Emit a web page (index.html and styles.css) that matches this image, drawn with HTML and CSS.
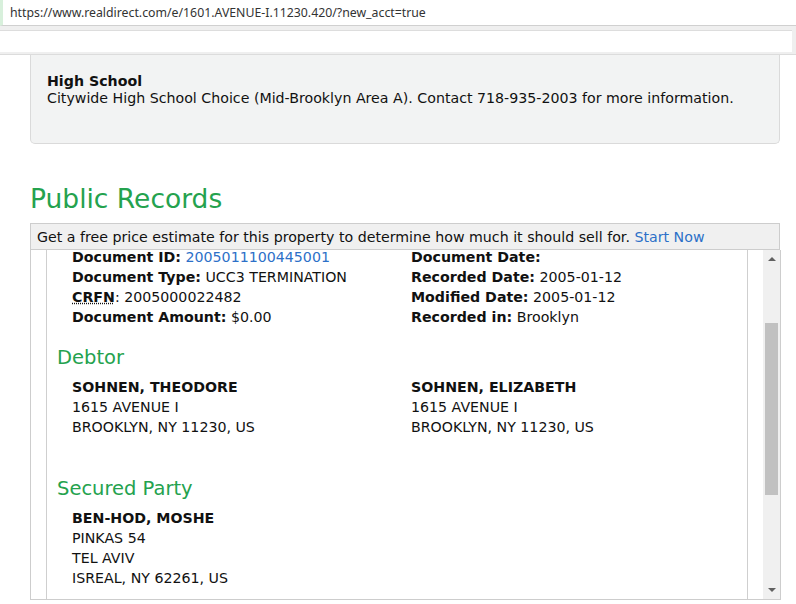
FILE: index.html
```html
<!DOCTYPE html>
<html>
  <head>
    <title>Public Records</title>
    <link rel="stylesheet" href="styles.css">
  </head>

  <body>
    <!-- Browser address bar -->
    <div class="address-bar">https://www.realdirect.com/e/1601.AVENUE-I.11230.420/?new_acct=true</div>
    <div class="toolbar">
      <div class="toolbar-input"></div>
    </div>

    <div class="page">
      <!-- School info box -->
      <div class="school-box">
        <p class="school-title">High School</p>
        <p class="school-text">Citywide High School Choice (Mid-Brooklyn Area A). Contact 718-935-2003 for more information.</p>
      </div>

      <h1 class="section-title">Public Records</h1>

      <div class="estimate-banner">
        Get a free price estimate for this property to determine how much it should sell for. <a href="#" class="link">Start Now</a>
      </div>

      <!-- Records frame with its own scrollbar -->
      <div class="records-frame">
        <div class="records-view">
          <div class="records">
            <div class="record-grid">
              <div class="record-col">
                <p><b>Document ID:</b> <a href="#" class="link">2005011100445001</a></p>
                <p><b>Document Type:</b> UCC3 TERMINATION</p>
                <p><abbr title="City Register File Number"><b>CRFN</b></abbr>: 2005000022482</p>
                <p><b>Document Amount:</b> $0.00</p>
              </div>
              <div class="record-col">
                <p><b>Document Date:</b></p>
                <p><b>Recorded Date:</b> 2005-01-12</p>
                <p><b>Modified Date:</b> 2005-01-12</p>
                <p><b>Recorded in:</b> Brooklyn</p>
              </div>
            </div>

            <h2 class="party-title">Debtor</h2>
            <div class="record-grid party">
              <div class="record-col">
                <p><b>SOHNEN, THEODORE</b></p>
                <p>1615 AVENUE I</p>
                <p>BROOKLYN, NY 11230, US</p>
              </div>
              <div class="record-col">
                <p><b>SOHNEN, ELIZABETH</b></p>
                <p>1615 AVENUE I</p>
                <p>BROOKLYN, NY 11230, US</p>
              </div>
            </div>

            <h2 class="party-title">Secured Party</h2>
            <div class="record-grid party">
              <div class="record-col">
                <p><b>BEN-HOD, MOSHE</b></p>
                <p>PINKAS 54</p>
                <p>TEL AVIV</p>
                <p>ISREAL, NY 62261, US</p>
              </div>
            </div>
          </div>
        </div>

        <div class="scrollbar">
          <div class="arrow-up"></div>
          <div class="thumb"></div>
          <div class="arrow-down"></div>
        </div>
      </div>
    </div>
  </body>
</html>
```

FILE: styles.css
```css
/* Page styles for the public records view */
body{
  margin: 0;
  background-color: white;
  color: #111;
  font-family: "DejaVu Sans", Verdana, sans-serif;
  font-size: 14.2px;
  overflow: hidden;
}

p{
  margin: 0;
}

.address-bar{
  /* Browser url line */
  height: 25px;
  border-bottom: 1px solid #d0d0d0;
  border-left: 3px solid #d8f0dc;
  padding-left: 7px;
  font-family: "Noto Sans", "Open Sans", sans-serif;
  font-size: 12.3px;
  line-height: 25px;
  color: #333;
}

.toolbar{
  background-color: #efefef;
  padding: 4px 0 2px 0;
  border-bottom: 1px solid #dcdcdc;
}

.toolbar-input{
  height: 21px;
  background-color: white;
  border-top: 1px solid #ddd;
  margin-right: 4px;
}

.page{
  padding: 0 16px 0 30px;
}

.school-box{
  /* Grey info box, top cut off by the toolbar */
  width: 716px;
  padding: 18px 16px 25px 16px;
  background-color: #f2f3f3;
  border: 1px solid #dadada;
  border-top: none;
  border-radius: 0 0 5px 5px;
  line-height: 17px;
}

.school-title{
  font-weight: bold;
}

.school-text{
  height: 28px;
}

.section-title{
  margin: 37px 0 6px 0;
  font-size: 26.5px;
  font-weight: normal;
  color: #24a24e;
  line-height: 36px;
}

.estimate-banner{
  width: 742px;
  height: 25px;
  padding-left: 6px;
  background-color: #f0f0f0;
  border: 1px solid #cdcdcd;
  line-height: 26px;
}

.link{
  color: #2c70c8;
  text-decoration: none;
}

.records-frame{
  display: flex;
  width: 749px;
  height: 349px;
  border: 1px solid #cdcdcd;
  border-top: none;
}

.records-view{
  flex: 1;
  overflow: hidden;
  padding: 0 15px;
}

.records{
  border-left: 1px solid #cfcfcf;
  border-right: 1px solid #cfcfcf;
  padding: 0 0 120px 10px;
  margin-top: -3px;
  line-height: 20px;
}

.record-grid{
  display: grid;
  grid-template-columns: 339px 1fr;
  padding-left: 15px;
}

.party{
  padding-bottom: 21px;
}

abbr{
  text-decoration: underline dotted;
}

.party-title{
  margin: 19px 0 7px 0;
  font-size: 19.5px;
  font-weight: normal;
  color: #24a24e;
  line-height: 24px;
}

.scrollbar{
  /* Fake scrollbar to match the screenshot */
  width: 17px;
  background-color: #f0f0f0;
  display: flex;
  flex-direction: column;
  align-items: center;
}

.arrow-up{
  margin-top: 7px;
  border-left: 4px solid transparent;
  border-right: 4px solid transparent;
  border-bottom: 4px solid #606060;
}

.thumb{
  width: 13px;
  height: 172px;
  margin-top: 62px;
  background-color: #c1c1c1;
}

.arrow-down{
  margin-top: auto;
  margin-bottom: 7px;
  border-left: 4px solid transparent;
  border-right: 4px solid transparent;
  border-top: 4px solid #606060;
}
```
